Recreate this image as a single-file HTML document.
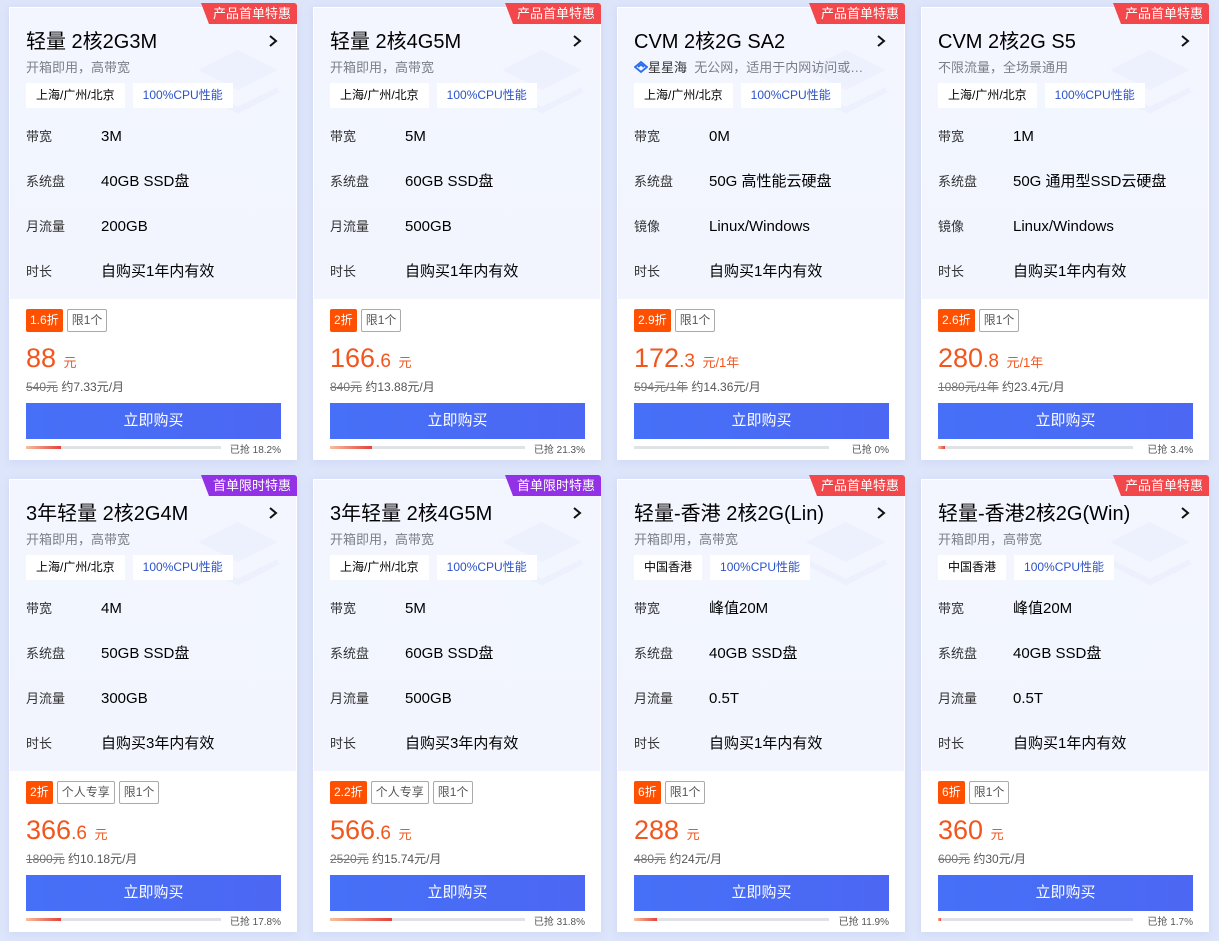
<!DOCTYPE html>
<html><head><meta charset="utf-8"><style>
*{margin:0;padding:0;box-sizing:border-box}
body{width:1219px;height:941px;background:#dde5fb;font-family:"Liberation Sans","Noto Sans CJK SC",sans-serif;position:relative;overflow:hidden;color:#000}
.card{position:absolute;width:288px;height:453px;background:#fff;box-shadow:0 2px 8px rgba(120,140,200,.15)}
.top{position:absolute;left:0;top:0;width:288px;height:292px;background:linear-gradient(180deg,#f3f6ff 0%,#f2f5fe 100%);border:1px solid #fff;border-bottom:none}
.deco{position:absolute;right:8px;top:22px;width:110px;height:110px;opacity:.35}
.badge{position:absolute;right:0;top:-4px;height:21px;padding:0 6px 0 12px;color:#fff;font-size:13px;line-height:21px;background:#f2474b;clip-path:polygon(0 0,100% 0,100% 100%,8px 100%);border-radius:0 3px 0 0}
.badge.p{background:#9331e6}
.title{position:absolute;left:17px;top:22px;font-size:20px;line-height:26px;color:#000;white-space:nowrap}
.arr{position:absolute;right:19px;top:28px;width:10px;height:12px}
.sub{position:absolute;left:17px;top:52px;font-size:13px;line-height:18px;color:#7a7f88;white-space:nowrap}
.tags{position:absolute;left:17px;top:76px;display:flex;gap:8px}
.tag{background:#fff;height:25px;line-height:25px;padding:0 10px;font-size:12px;color:#000}
.tag.b{color:#2c52c8}
.row{position:absolute;left:17px;font-size:13px;line-height:20px;color:#333;white-space:nowrap;margin-top:2px}
.row span{position:absolute;left:75px;top:0;font-size:15px;line-height:20px;color:#000}
.disc{position:absolute;left:17px;top:302px;display:flex;gap:4px}
.d{background:#ff4f00;color:#fff;font-size:12px;height:23px;line-height:23px;padding:0 4px;border-radius:2px}
.l{border:1px solid #aaa;color:#555;font-size:12px;height:23px;line-height:21px;padding:0 4px;border-radius:2px}
.price{position:absolute;left:17px;top:335px;color:#f2561d;font-size:27px;line-height:32px;white-space:nowrap}
.price small{font-size:13px}
.price b{font-weight:normal;font-size:19px}
.old{position:absolute;left:17px;top:371px;font-size:12px;color:#555;white-space:nowrap}
.old s{color:#777}
.btn{position:absolute;left:17px;top:396px;width:255px;height:36px;background:linear-gradient(90deg,#4670f7,#4c67f3);color:#fff;font-size:15px;line-height:36px;text-align:center}
.bar{position:absolute;left:17px;top:439px;width:195px;height:3px;background:#e1e2e6}
.bar i{display:block;height:3px;background:linear-gradient(90deg,#f5c0a0,#e5413a)}
.pct{position:absolute;right:16px;top:434px;font-size:10px;color:#555}
</style></head><body>

<div class="card" style="left:9px;top:7px"><div class="top"><svg class="deco" viewBox="0 0 110 110"><path d="M20 40 L60 20 L100 40 L60 60Z" fill="#e3e9fb"/><path d="M20 60 L60 80 L100 60" stroke="#e3e9fb" stroke-width="6" fill="none"/></svg></div><div class="badge">产品首单特惠</div>
<div class="title">轻量 2核2G3M</div><svg class="arr" viewBox="0 0 10 12"><path d="M2 1 L8 6 L2 11" stroke="#111" stroke-width="2" fill="none"/></svg><div class="sub">开箱即用，高带宽</div>
<div class="tags"><div class="tag">上海/广州/北京</div><div class="tag b">100%CPU性能</div></div>
<div class="row" style="top:118px">带宽<span>3M</span></div><div class="row" style="top:163px">系统盘<span>40GB SSD盘</span></div><div class="row" style="top:208px">月流量<span>200GB</span></div><div class="row" style="top:253px">时长<span>自购买1年内有效</span></div>
<div class="disc"><div class="d">1.6折</div><div class="l">限1个</div></div>
<div class="price">88 <small>元</small></div><div class="old"><s>540元</s> 约7.33元/月</div>
<div class="btn">立即购买</div><div class="bar"><i style="width:35px"></i></div><div class="pct">已抢 18.2%</div></div>

<div class="card" style="left:313px;top:7px"><div class="top"><svg class="deco" viewBox="0 0 110 110"><path d="M20 40 L60 20 L100 40 L60 60Z" fill="#e3e9fb"/><path d="M20 60 L60 80 L100 60" stroke="#e3e9fb" stroke-width="6" fill="none"/></svg></div><div class="badge">产品首单特惠</div>
<div class="title">轻量 2核4G5M</div><svg class="arr" viewBox="0 0 10 12"><path d="M2 1 L8 6 L2 11" stroke="#111" stroke-width="2" fill="none"/></svg><div class="sub">开箱即用，高带宽</div>
<div class="tags"><div class="tag">上海/广州/北京</div><div class="tag b">100%CPU性能</div></div>
<div class="row" style="top:118px">带宽<span>5M</span></div><div class="row" style="top:163px">系统盘<span>60GB SSD盘</span></div><div class="row" style="top:208px">月流量<span>500GB</span></div><div class="row" style="top:253px">时长<span>自购买1年内有效</span></div>
<div class="disc"><div class="d">2折</div><div class="l">限1个</div></div>
<div class="price">166<b>.6</b> <small>元</small></div><div class="old"><s>840元</s> 约13.88元/月</div>
<div class="btn">立即购买</div><div class="bar"><i style="width:42px"></i></div><div class="pct">已抢 21.3%</div></div>

<div class="card" style="left:617px;top:7px"><div class="top"><svg class="deco" viewBox="0 0 110 110"><path d="M20 40 L60 20 L100 40 L60 60Z" fill="#e3e9fb"/><path d="M20 60 L60 80 L100 60" stroke="#e3e9fb" stroke-width="6" fill="none"/></svg></div><div class="badge">产品首单特惠</div>
<div class="title">CVM 2核2G SA2</div><svg class="arr" viewBox="0 0 10 12"><path d="M2 1 L8 6 L2 11" stroke="#111" stroke-width="2" fill="none"/></svg><div class="sub"><svg width="14" height="12" viewBox="0 0 14 12" style="vertical-align:-1px"><path d="M7 1 L13 6 L7 11 L1 6Z M4 6 L7 3.5 L10 6" stroke="#2a6ef0" stroke-width="1.8" fill="none"/></svg><span style="color:#333">星星海</span>&nbsp; 无公网，适用于内网访问或…</div>
<div class="tags"><div class="tag">上海/广州/北京</div><div class="tag b">100%CPU性能</div></div>
<div class="row" style="top:118px">带宽<span>0M</span></div><div class="row" style="top:163px">系统盘<span>50G 高性能云硬盘</span></div><div class="row" style="top:208px">镜像<span>Linux/Windows</span></div><div class="row" style="top:253px">时长<span>自购买1年内有效</span></div>
<div class="disc"><div class="d">2.9折</div><div class="l">限1个</div></div>
<div class="price">172<b>.3</b> <small>元/1年</small></div><div class="old"><s>594元/1年</s> 约14.36元/月</div>
<div class="btn">立即购买</div><div class="bar"><i style="width:0"></i></div><div class="pct">已抢 0%</div></div>

<div class="card" style="left:921px;top:7px"><div class="top"><svg class="deco" viewBox="0 0 110 110"><path d="M20 40 L60 20 L100 40 L60 60Z" fill="#e3e9fb"/><path d="M20 60 L60 80 L100 60" stroke="#e3e9fb" stroke-width="6" fill="none"/></svg></div><div class="badge">产品首单特惠</div>
<div class="title">CVM 2核2G S5</div><svg class="arr" viewBox="0 0 10 12"><path d="M2 1 L8 6 L2 11" stroke="#111" stroke-width="2" fill="none"/></svg><div class="sub">不限流量，全场景通用</div>
<div class="tags"><div class="tag">上海/广州/北京</div><div class="tag b">100%CPU性能</div></div>
<div class="row" style="top:118px">带宽<span>1M</span></div><div class="row" style="top:163px">系统盘<span>50G 通用型SSD云硬盘</span></div><div class="row" style="top:208px">镜像<span>Linux/Windows</span></div><div class="row" style="top:253px">时长<span>自购买1年内有效</span></div>
<div class="disc"><div class="d">2.6折</div><div class="l">限1个</div></div>
<div class="price">280<b>.8</b> <small>元/1年</small></div><div class="old"><s>1080元/1年</s> 约23.4元/月</div>
<div class="btn">立即购买</div><div class="bar"><i style="width:7px"></i></div><div class="pct">已抢 3.4%</div></div>

<div class="card" style="left:9px;top:479px"><div class="top"><svg class="deco" viewBox="0 0 110 110"><path d="M20 40 L60 20 L100 40 L60 60Z" fill="#e3e9fb"/><path d="M20 60 L60 80 L100 60" stroke="#e3e9fb" stroke-width="6" fill="none"/></svg></div><div class="badge p">首单限时特惠</div>
<div class="title">3年轻量 2核2G4M</div><svg class="arr" viewBox="0 0 10 12"><path d="M2 1 L8 6 L2 11" stroke="#111" stroke-width="2" fill="none"/></svg><div class="sub">开箱即用，高带宽</div>
<div class="tags"><div class="tag">上海/广州/北京</div><div class="tag b">100%CPU性能</div></div>
<div class="row" style="top:118px">带宽<span>4M</span></div><div class="row" style="top:163px">系统盘<span>50GB SSD盘</span></div><div class="row" style="top:208px">月流量<span>300GB</span></div><div class="row" style="top:253px">时长<span>自购买3年内有效</span></div>
<div class="disc"><div class="d">2折</div><div class="l">个人专享</div><div class="l">限1个</div></div>
<div class="price">366<b>.6</b> <small>元</small></div><div class="old"><s>1800元</s> 约10.18元/月</div>
<div class="btn">立即购买</div><div class="bar"><i style="width:35px"></i></div><div class="pct">已抢 17.8%</div></div>

<div class="card" style="left:313px;top:479px"><div class="top"><svg class="deco" viewBox="0 0 110 110"><path d="M20 40 L60 20 L100 40 L60 60Z" fill="#e3e9fb"/><path d="M20 60 L60 80 L100 60" stroke="#e3e9fb" stroke-width="6" fill="none"/></svg></div><div class="badge p">首单限时特惠</div>
<div class="title">3年轻量 2核4G5M</div><svg class="arr" viewBox="0 0 10 12"><path d="M2 1 L8 6 L2 11" stroke="#111" stroke-width="2" fill="none"/></svg><div class="sub">开箱即用，高带宽</div>
<div class="tags"><div class="tag">上海/广州/北京</div><div class="tag b">100%CPU性能</div></div>
<div class="row" style="top:118px">带宽<span>5M</span></div><div class="row" style="top:163px">系统盘<span>60GB SSD盘</span></div><div class="row" style="top:208px">月流量<span>500GB</span></div><div class="row" style="top:253px">时长<span>自购买3年内有效</span></div>
<div class="disc"><div class="d">2.2折</div><div class="l">个人专享</div><div class="l">限1个</div></div>
<div class="price">566<b>.6</b> <small>元</small></div><div class="old"><s>2520元</s> 约15.74元/月</div>
<div class="btn">立即购买</div><div class="bar"><i style="width:62px"></i></div><div class="pct">已抢 31.8%</div></div>

<div class="card" style="left:617px;top:479px"><div class="top"><svg class="deco" viewBox="0 0 110 110"><path d="M20 40 L60 20 L100 40 L60 60Z" fill="#e3e9fb"/><path d="M20 60 L60 80 L100 60" stroke="#e3e9fb" stroke-width="6" fill="none"/></svg></div><div class="badge">产品首单特惠</div>
<div class="title">轻量-香港 2核2G(Lin)</div><svg class="arr" viewBox="0 0 10 12"><path d="M2 1 L8 6 L2 11" stroke="#111" stroke-width="2" fill="none"/></svg><div class="sub">开箱即用，高带宽</div>
<div class="tags"><div class="tag">中国香港</div><div class="tag b">100%CPU性能</div></div>
<div class="row" style="top:118px">带宽<span>峰值20M</span></div><div class="row" style="top:163px">系统盘<span>40GB SSD盘</span></div><div class="row" style="top:208px">月流量<span>0.5T</span></div><div class="row" style="top:253px">时长<span>自购买1年内有效</span></div>
<div class="disc"><div class="d">6折</div><div class="l">限1个</div></div>
<div class="price">288 <small>元</small></div><div class="old"><s>480元</s> 约24元/月</div>
<div class="btn">立即购买</div><div class="bar"><i style="width:23px"></i></div><div class="pct">已抢 11.9%</div></div>

<div class="card" style="left:921px;top:479px"><div class="top"><svg class="deco" viewBox="0 0 110 110"><path d="M20 40 L60 20 L100 40 L60 60Z" fill="#e3e9fb"/><path d="M20 60 L60 80 L100 60" stroke="#e3e9fb" stroke-width="6" fill="none"/></svg></div><div class="badge">产品首单特惠</div>
<div class="title">轻量-香港2核2G(Win)</div><svg class="arr" viewBox="0 0 10 12"><path d="M2 1 L8 6 L2 11" stroke="#111" stroke-width="2" fill="none"/></svg><div class="sub">开箱即用，高带宽</div>
<div class="tags"><div class="tag">中国香港</div><div class="tag b">100%CPU性能</div></div>
<div class="row" style="top:118px">带宽<span>峰值20M</span></div><div class="row" style="top:163px">系统盘<span>40GB SSD盘</span></div><div class="row" style="top:208px">月流量<span>0.5T</span></div><div class="row" style="top:253px">时长<span>自购买1年内有效</span></div>
<div class="disc"><div class="d">6折</div><div class="l">限1个</div></div>
<div class="price">360 <small>元</small></div><div class="old"><s>600元</s> 约30元/月</div>
<div class="btn">立即购买</div><div class="bar"><i style="width:3px"></i></div><div class="pct">已抢 1.7%</div></div>

</body></html>
